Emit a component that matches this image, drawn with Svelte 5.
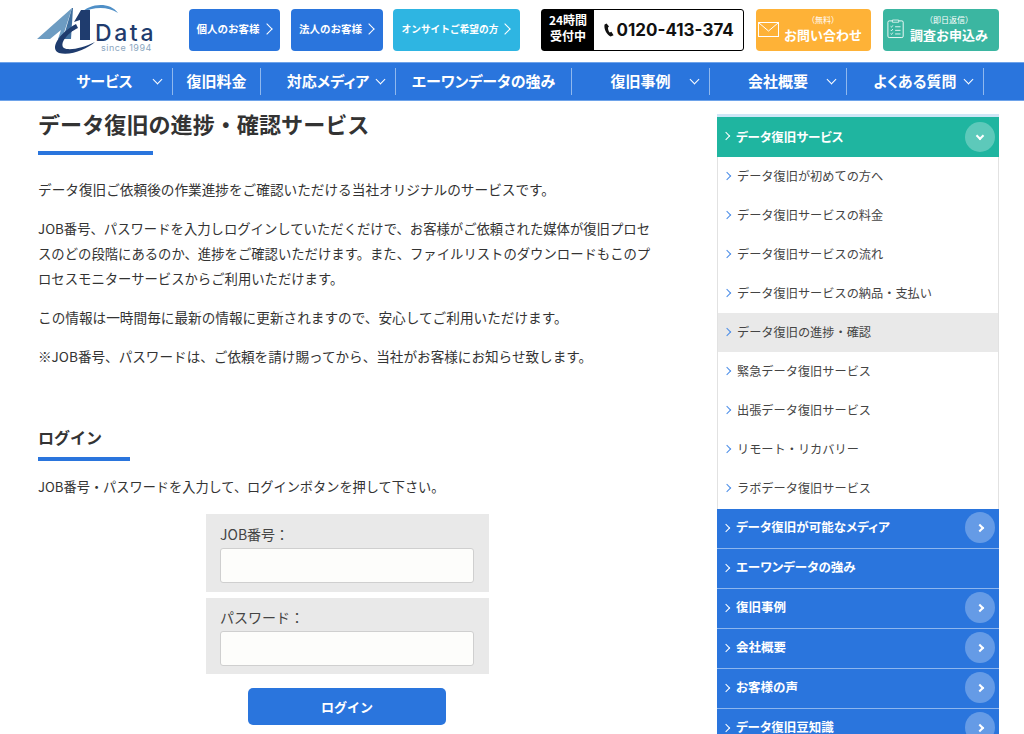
<script>
  const nav = [
    { label: 'サービス', w: 136, chev: true },
    { label: '復旧料金', w: 88, chev: false },
    { label: '対応メディア', w: 135, chev: true },
    { label: 'エーワンデータの強み', w: 176, chev: false },
    { label: '復旧事例', w: 138, chev: true },
    { label: '会社概要', w: 137, chev: true },
    { label: 'よくある質問', w: 137, chev: true }
  ];
  const sub = ['データ復旧が初めての方へ', 'データ復旧サービスの料金', 'データ復旧サービスの流れ', 'データ復旧サービスの納品・支払い', 'データ復旧の進捗・確認', '緊急データ復旧サービス', '出張データ復旧サービス', 'リモート・リカバリー', 'ラボデータ復旧サービス'];
  const cats = [
    { label: 'データ復旧が可能なメディア', more: true },
    { label: 'エーワンデータの強み', more: false },
    { label: '復旧事例', more: true },
    { label: '会社概要', more: true },
    { label: 'お客様の声', more: true },
    { label: 'データ復旧豆知識', more: true }
  ];
</script>

<div class="page">
  <header class="top">
    <a class="logo" href="#top" aria-label="A1 Data">
      <svg class="logo-mark" viewBox="0 0 82 54" width="82" height="54" aria-hidden="true">
        <path d="M0 36 L35 5 L25 36 L21 36 L24 27 L13 36 Z" fill="#6d9cc2" />
        <path d="M35 5 L36 5 L34 36 L26 36 Z" fill="#3f6f9f" />
        <path d="M44 10 C52 1 72 -2 81 10 C70 3 56 4 44 10 Z" fill="#4f8fc7" />
        <path d="M44 7 L53 7 L53 37 L43 37 L43 17 L37 19 Z" fill="#1f3c6e" />
        <path d="M39 21 C22 30 12 46 22 50 C34 53 50 46 58 39 C46 45 32 48 27 45 C22 41 30 30 41 25 Z" fill="#1f3c6e" />
      </svg>
      <span class="logo-data">Data</span>
      <span class="logo-since">since 1994</span>
    </a>
    <a class="hbtn blue w1" href="#a">個人のお客様<span class="gt"></span></a>
    <a class="hbtn blue w2" href="#a">法人のお客様<span class="gt"></span></a>
    <a class="hbtn cyan w3" href="#a">オンサイトご希望の方<span class="gt"></span></a>
    <div class="phone">
      <div class="phone-label">24時間<br />受付中</div>
      <div class="phone-num">
        <svg viewBox="0 0 10 14" width="10" height="14" aria-hidden="true"><path d="M2.6 0.5 L0.6 1.5 C-0.4 5.5 2.5 11.5 6.6 13.6 L9.6 12.2 L7.4 8.8 L5.8 9.6 C4.6 8.2 3.8 6 4 4.4 L5 3.6 Z" fill="#111" /></svg>
        <span>0120-413-374</span>
      </div>
    </div>
    <a class="cta orange" href="#a">
      <svg viewBox="0 0 21 15" width="21" height="15" aria-hidden="true"><rect x="0.5" y="0.5" width="20" height="14" fill="none" stroke="#fff" /><path d="M1 1 L10.5 9 L20 1" fill="none" stroke="#fff" /></svg>
      <span class="cta-text"><small>（無料）</small><b>お問い合わせ</b></span>
    </a>
    <a class="cta green" href="#a">
      <svg viewBox="0 0 20 22" width="18" height="20" aria-hidden="true"><rect x="1" y="2" width="17" height="18.5" rx="1.5" fill="none" stroke="#fff" /><path d="M6 1 H13 V3.5 H6 Z" fill="#3bb6a1" stroke="#fff" stroke-width="0.8" /><path d="M4 8 L5 9 L6.5 7 M4 12 L5 13 L6.5 11 M4 16 L5 17 L6.5 15 M9 8.5 H15 M9 12.5 H15 M9 16.5 H15" fill="none" stroke="#fff" stroke-width="0.9" /></svg>
      <span class="cta-text"><small>（即日返信）</small><b>調査お申込み</b></span>
    </a>
  </header>

  <nav class="gnav">
    {#each nav as n}
      <a class="gitem" href="#a" style="width:{n.w}px">
        {n.label}
        {#if n.chev}<span class="gchev"></span>{/if}
      </a>
    {/each}
  </nav>

  <div class="columns">
    <main class="content">
      <h1>データ復旧の進捗・確認サービス</h1>
      <p class="p1">データ復旧ご依頼後の作業進捗をご確認いただける当社オリジナルのサービスです。</p>
      <p class="p2">JOB番号、パスワードを入力しログインしていただくだけで、お客様がご依頼された媒体が復旧プロセスのどの段階にあるのか、進捗をご確認いただけます。また、ファイルリストのダウンロードもこのプロセスモニターサービスからご利用いただけます。</p>
      <p class="p3">この情報は一時間毎に最新の情報に更新されますので、安心してご利用いただけます。</p>
      <p class="p4">※JOB番号、パスワードは、ご依頼を請け賜ってから、当社がお客様にお知らせ致します。</p>
      <h2>ログイン</h2>
      <p class="after-h2">JOB番号・パスワードを入力して、ログインボタンを押して下さい。</p>
      <form class="login" onsubmit={(e) => e.preventDefault()}>
        <label class="field">JOB番号：<input type="text" /></label>
        <label class="field">パスワード：<input type="password" /></label>
        <button type="submit">ログイン</button>
      </form>
    </main>

    <aside class="side">
      <div class="cat teal">
        <span class="cgt"></span>データ復旧サービス
        <span class="round"><span class="down"></span></span>
      </div>
      <ul class="sublist">
        {#each sub as s}
          <li class:active={s === 'データ復旧の進捗・確認'}><span class="sgt"></span>{s}</li>
        {/each}
      </ul>
      {#each cats as c}
        <div class="cat">
          <span class="cgt"></span>{c.label}
          {#if c.more}<span class="round"><span class="right"></span></span>{/if}
        </div>
      {/each}
    </aside>
  </div>
</div>

<style>
  :global(body) {
    margin: 0;
    background: #fff;
    font-family: "Noto Sans CJK JP", "Noto Sans", sans-serif;
    color: #333;
  }
  a { text-decoration: none; color: inherit; }
  .page { height: 734px; overflow: hidden; }

  .top {
    height: 62px;
    box-sizing: border-box;
    padding-top: 9px;
    display: flex;
    align-items: flex-start;
  }
  .logo {
    position: relative;
    width: 114px;
    height: 50px;
    margin: -6px 38px 0 37px;
    flex: none;
  }
  .logo-mark { position: absolute; left: 0; top: 0; }
  .logo-data {
    position: absolute;
    left: 58px;
    top: 21px;
    font: 500 23px/18px "Inter", "Liberation Sans", sans-serif;
    letter-spacing: 2.6px;
    color: #1f3c6e;
  }
  .logo-since {
    position: absolute;
    left: 64px;
    top: 40px;
    font: 400 9px/9px "Inter", sans-serif;
    letter-spacing: 0.5px;
    color: #8ba6c0;
    white-space: nowrap;
  }
  .hbtn {
    height: 42px;
    box-sizing: border-box;
    padding: 0 2px 3px 0;
    border-radius: 4px;
    color: #fff;
    font-size: 10.5px;
    font-weight: 700;
    display: flex;
    align-items: center;
    justify-content: center;
    gap: 3px;
    margin-right: 11px;
    flex: none;
    white-space: nowrap;
  }
  .blue { background: #2a75dd; }
  .cyan { background: #2eb5e2; }
  .w1 { width: 91px; }
  .w2 { width: 92px; margin-right: 10px; }
  .w3 { width: 127px; margin-right: 21px; font-size: 9.7px; }
  .gt {
    width: 8px;
    height: 8px;
    box-sizing: border-box;
    border-top: 1.3px solid #fff;
    border-right: 1.3px solid #fff;
    transform: rotate(45deg);
    flex: none;
  }
  .phone {
    width: 203px;
    height: 42px;
    box-sizing: border-box;
    border: 1.5px solid #000;
    border-radius: 3px;
    display: flex;
    margin-right: 12px;
    flex: none;
  }
  .phone-label {
    width: 52px;
    background: #000;
    color: #fff;
    font-size: 12px;
    font-weight: 700;
    line-height: 16px;
    text-align: center;
    padding-top: 2px;
    box-sizing: border-box;
  }
  .phone-num {
    display: flex;
    align-items: center;
    gap: 3px;
    padding-left: 9.5px;
    font: 700 17px "Inter", "Liberation Sans", sans-serif;
    color: #111;
  }
  .cta {
    height: 42px;
    border-radius: 4px;
    color: #fff;
    display: flex;
    align-items: center;
    flex: none;
    gap: 5px;
    box-sizing: border-box;
    padding-bottom: 2px;
  }
  .orange { width: 115px; background: #feb237; margin-right: 12px; padding-left: 2px; }
  .green { width: 116px; background: #3bb6a1; padding-left: 4px; }
  .cta-text { display: flex; flex-direction: column; align-items: center; line-height: 1; padding-bottom: 1px; }
  .cta-text small { font-size: 8px; font-weight: 400; margin-bottom: 4.8px; }
  .cta-text b { font-size: 13px; font-weight: 700; }

  .gnav {
    height: 39px;
    box-sizing: border-box;
    background: #2a75dd;
    padding-left: 37px;
    display: flex;
    align-items: center;
    border-top: 1px solid #6ea3ea;
    border-bottom: 1px solid #6ea3ea;
  }
  .gitem {
    position: relative;
    height: 27px;
    display: flex;
    align-items: center;
    justify-content: center;
    flex: none;
    box-sizing: border-box;
    padding-bottom: 3px;
    color: #fff;
    font-size: 15px;
    font-weight: 700;
    font-feature-settings: "palt";
    border-right: 1px solid #8fb8ee;
  }
  .gchev {
    position: absolute;
    right: 11px;
    top: 8px;
    width: 7px;
    height: 7px;
    box-sizing: border-box;
    border-right: 1.4px solid #fff;
    border-bottom: 1.4px solid #fff;
    transform: rotate(45deg);
  }

  .columns { display: flex; padding-left: 38px; }
  .content { width: 618px; padding-top: 6px; flex: none; }
  h1 {
    margin: 0;
    font-size: 22.1px;
    line-height: 33px;
    font-weight: 700;
    color: #333;
    position: relative;
    height: 48px;
  }
  h1::after {
    content: "";
    position: absolute;
    left: 0;
    bottom: 0;
    width: 115px;
    height: 4px;
    background: #2a75dd;
  }
  h2 {
    margin: 56px 0 0;
    font-size: 16px;
    line-height: 24px;
    font-weight: 700;
    color: #333;
    position: relative;
    height: 36px;
    width: 92px;
  }
  h2::after {
    content: "";
    position: absolute;
    left: 0;
    bottom: 0;
    width: 92px;
    height: 4px;
    background: #2a75dd;
  }
  p {
    margin: 14px 0 0;
    font-size: 13.65px;
    line-height: 25px;
    color: #333;
  }
  h1 + p { margin-top: 22px; }
  p.p2 { font-size: 13.35px; }
  p.p4 { font-size: 13.6px; }
  p.after-h2 { margin-top: 13px; font-size: 13.2px; }
  .login {
    width: 283px;
    margin: 15px 0 0 168px;
    display: flex;
    flex-direction: column;
    gap: 6px;
  }
  .field {
    display: block;
    background: #e9e9e9;
    padding: 9px 15px 9px 14px;
    font-size: 14px;
    line-height: 23px;
    color: #444;
  }
  .field + .field { padding: 8px 15px 8px 14px; }
  .field input {
    display: block;
    box-sizing: border-box;
    width: 100%;
    height: 35px;
    margin-top: 2px;
    border: 1px solid #cfcfcf;
    border-radius: 3px;
    background: #fdfdfb;
  }
  .login button {
    align-self: flex-start;
    width: 198px;
    height: 37px;
    margin: 8px 0 0 42px;
    border: 0;
    border-radius: 5px;
    background: #2a75dd;
    color: #fff;
    font: 700 13px "Noto Sans CJK JP", sans-serif;
  }

  .side {
    width: 282px;
    margin-left: 61px;
    margin-top: 13px;
    border-top: 3px solid #cfe6f6;
    flex: none;
    box-sizing: border-box;
  }
  .cat {
    position: relative;
    height: 39px;
    box-sizing: content-box;
    background: #2a75dd;
    color: #fff;
    font-size: 12.5px;
    font-feature-settings: "palt";
    line-height: 35px;
    font-weight: 700;
    display: flex;
    align-items: flex-start;
    padding-left: 6px;
    border-bottom: 1px solid #8db6ee;
  }
  .cat.teal { background: #1fb5a0; border-bottom: 0; height: 40px; line-height: 39px; }
  .cgt {
    width: 5px;
    height: 5px;
    margin: 16px 7px 0 0;
    border-top: 1px solid #fff;
    border-right: 1px solid #fff;
    transform: rotate(45deg);
  }
  .round {
    position: absolute;
    right: 4px;
    top: 3px;
    width: 30px;
    height: 31px;
    border-radius: 50%;
    background: rgba(255, 255, 255, 0.28);
    display: flex;
    align-items: center;
    justify-content: center;
  }
  .teal .round { top: 5px; height: 30px; }
  .down, .right {
    width: 6px;
    height: 6px;
    box-sizing: border-box;
    border-right: 2px solid #fff;
    border-bottom: 2px solid #fff;
  }
  .down { transform: translateY(-1px) rotate(45deg); }
  .right { transform: rotate(-45deg); }
  .sublist {
    list-style: none;
    margin: 0;
    padding: 0 0 1px;
    border-left: 1px solid #e2e2e2;
    border-right: 1px solid #e2e2e2;
  }
  .sublist li {
    height: 39px;
    box-sizing: border-box;
    padding-bottom: 1px;
    display: flex;
    align-items: center;
    padding-left: 6px;
    font-size: 12.2px;
    color: #444;
  }
  .sublist li.active { background: #e9e9e9; }
  .sgt {
    width: 6px;
    height: 6px;
    box-sizing: border-box;
    margin-right: 7px;
    border-top: 1.2px solid #4a8de8;
    border-right: 1.2px solid #4a8de8;
    transform: rotate(45deg);
  }
</style>
